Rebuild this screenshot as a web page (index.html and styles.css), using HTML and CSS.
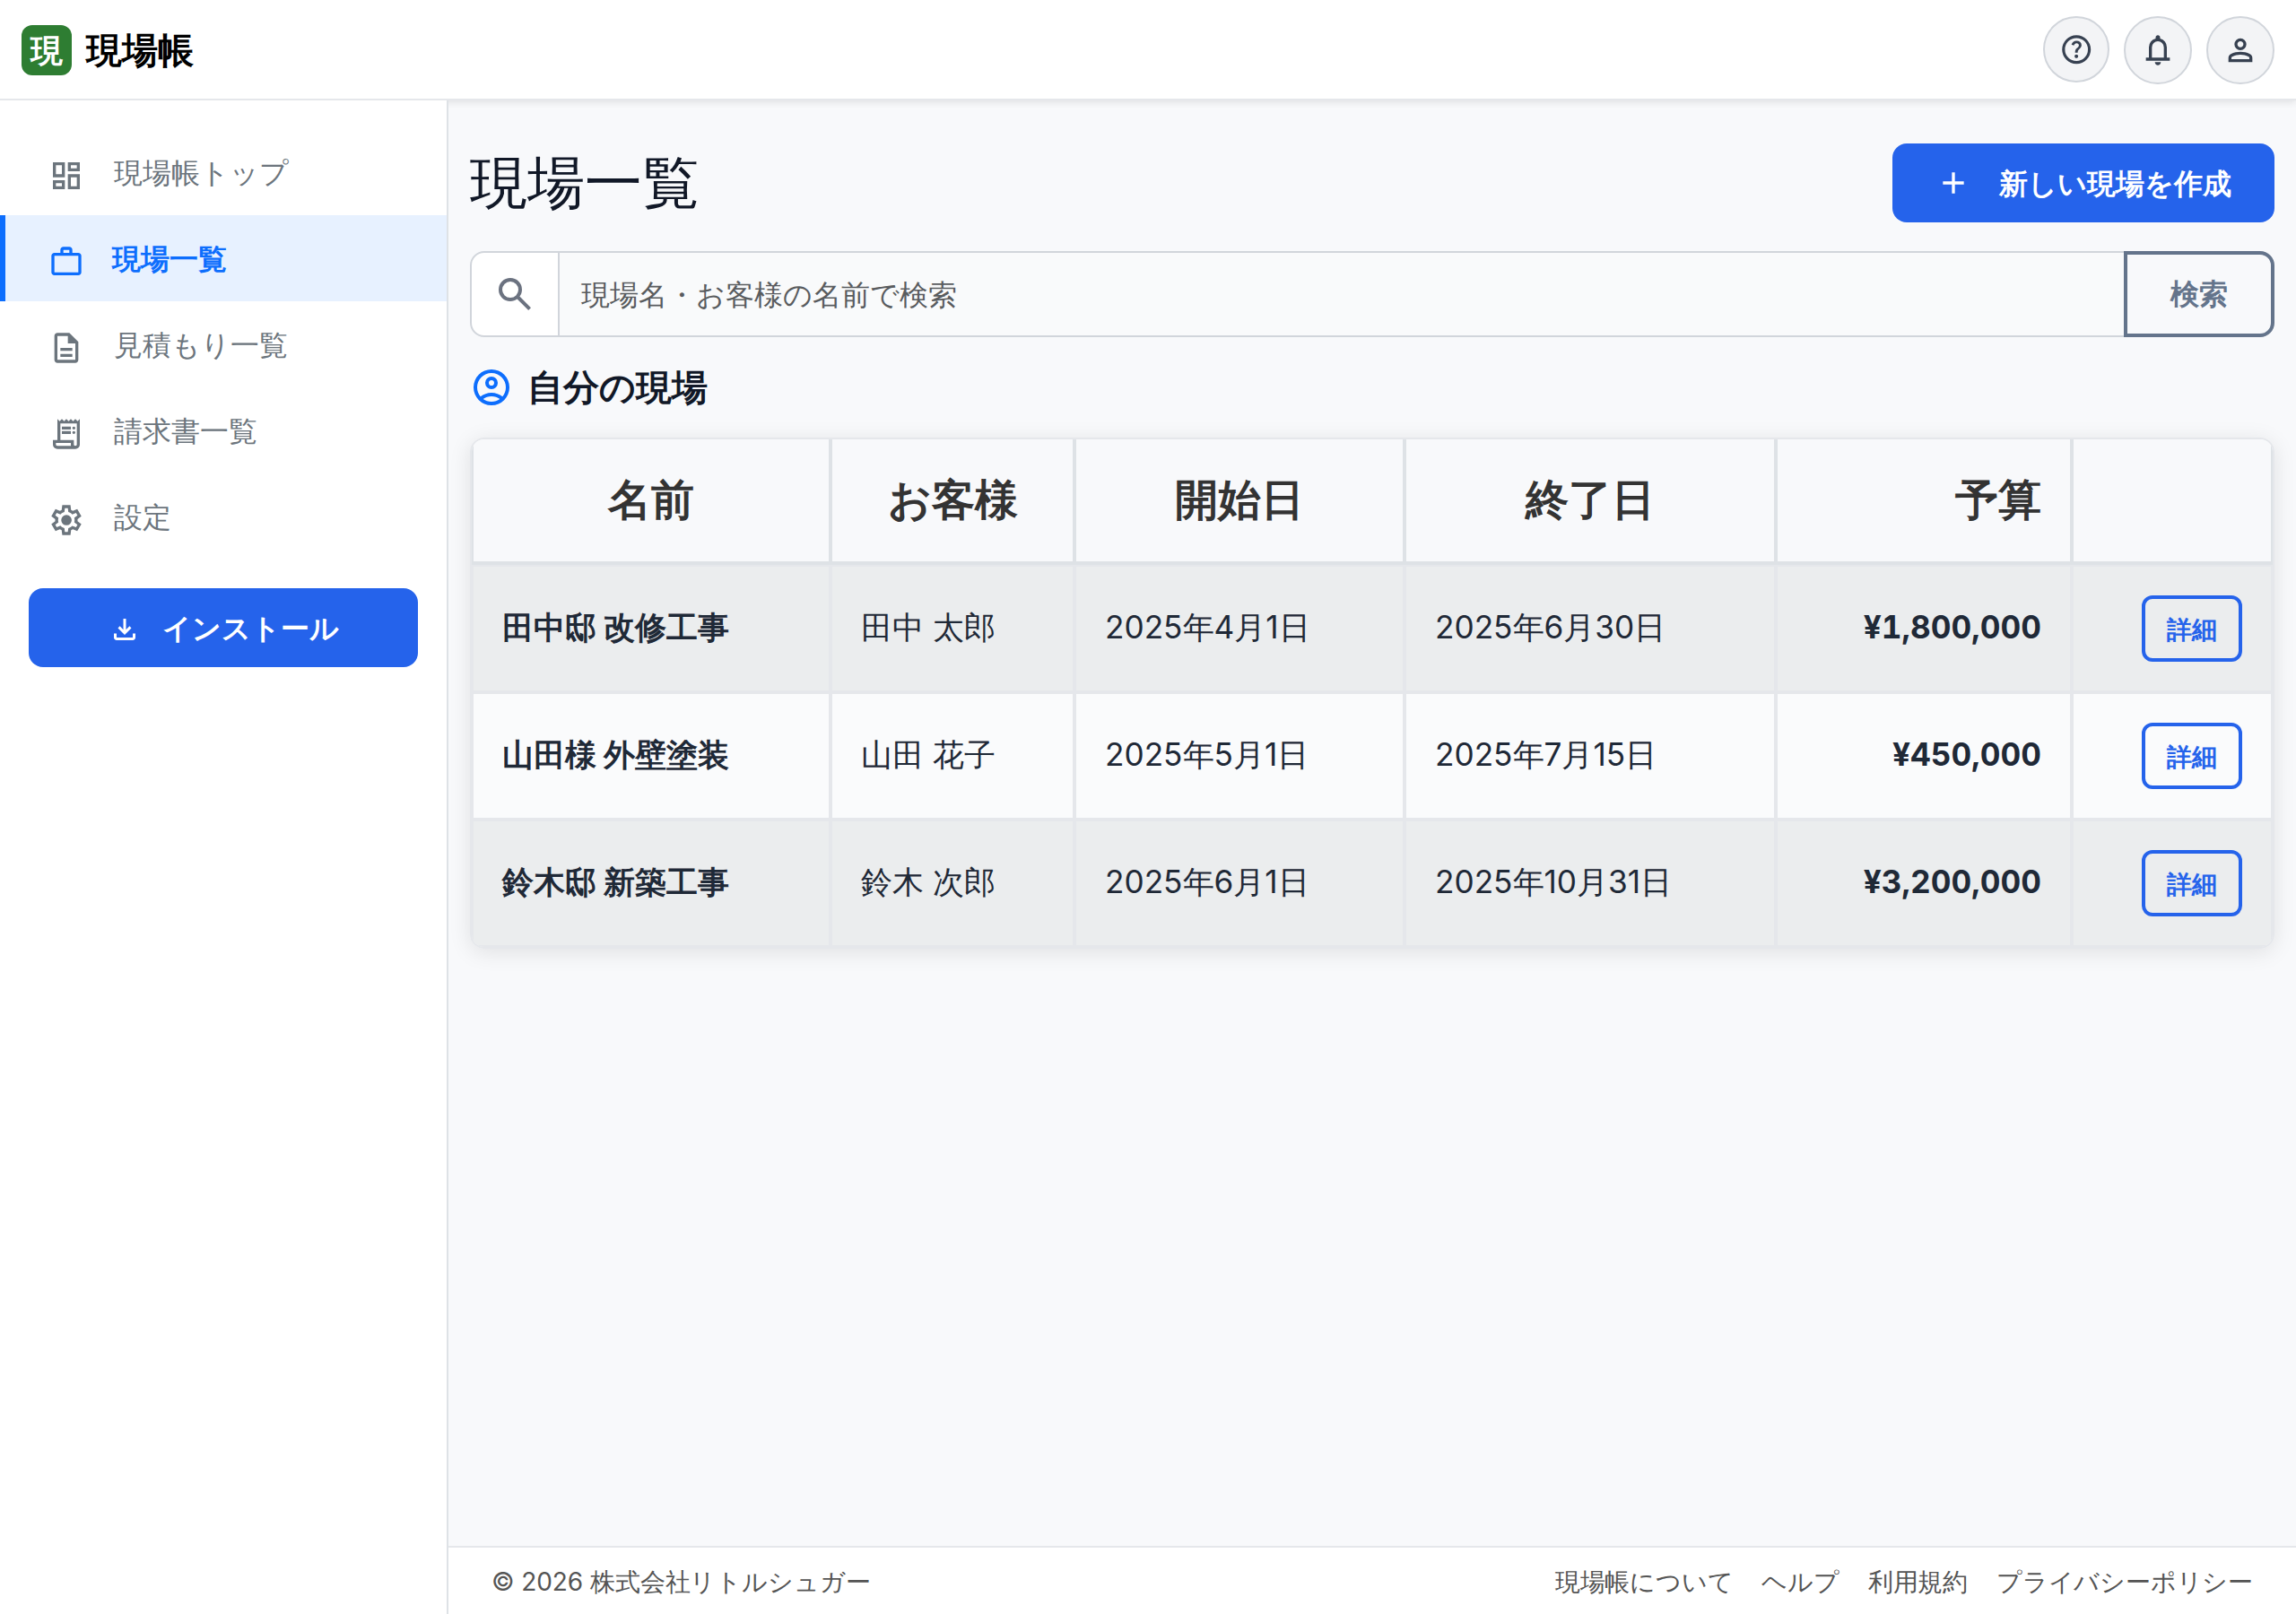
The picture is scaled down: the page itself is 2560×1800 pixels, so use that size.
FILE: index.html
```html
<!DOCTYPE html>
<html lang="ja">
<head>
<meta charset="utf-8">
<title>現場一覧 - 現場帳</title>
<link rel="stylesheet" href="styles.css">
</head>
<body>
<header class="topbar">
  <a class="brand"><span class="brand-mark">現</span><span class="brand-name">現場帳</span></a>
  <div class="top-actions">
    <button class="round-btn round-btn-help"><svg viewBox="0 -960 960 960"><path d="M478-240q21 0 35.500-14.500T528-290q0-21-14.500-35.500T478-340q-21 0-35.500 14.500T428-290q0 21 14.500 35.500T478-240Zm-36-154h74q0-33 7.500-52t42.500-52q26-26 41-49.500t15-56.500q0-56-41-86t-97-30q-57 0-92.500 30T342-618l66 26q5-18 22.500-39t53.500-21q32 0 48 17.500t16 38.500q0 20-12 37.500T506-526q-44 39-54 59t-10 73Zm38 314q-83 0-156-31.500T197-197q-54-54-85.500-127T80-480q0-83 31.500-156T197-763q54-54 127-85.500T480-880q83 0 156 31.500T763-763q54 54 85.500 127T880-480q0 83-31.500 156T763-197q-54 54-127 85.500T480-80Zm0-80q134 0 227-93t93-227q0-134-93-227t-227-93q-134 0-227 93t-93 227q0 134 93 227t227 93Z"/></svg></button>
    <button class="round-btn"><svg viewBox="0 -960 960 960"><path d="M160-200v-80h80v-280q0-83 50-147.500T420-792v-28q0-25 17.500-42.500T480-880q25 0 42.500 17.500T540-820v28q80 20 130 84.500T720-560v280h80v80H160Zm320 120q-33 0-56.500-23.500T400-160h160q0 33-23.500 56.500T480-80ZM320-280h320v-280q0-66-47-113t-113-47q-66 0-113 47t-47 113v280Z"/></svg></button>
    <button class="round-btn"><svg viewBox="0 -960 960 960"><path d="M480-480q-66 0-113-47t-47-113q0-66 47-113t113-47q66 0 113 47t47 113q0 66-47 113t-113 47ZM160-160v-112q0-34 17.500-62.500T224-378q62-31 126-46.500T480-440q66 0 130 15.500T736-378q29 15 46.500 43.500T800-272v112H160Zm80-80h480v-32q0-11-5.500-20T700-306q-54-27-109-40.500T480-360q-56 0-111 13.500T260-306q-9 5-14.500 14t-5.500 20v32Zm240-320q33 0 56.500-23.500T560-640q0-33-23.500-56.500T480-720q-33 0-56.500 23.500T400-640q0 33 23.500 56.500T480-560Z"/></svg></button>
  </div>
</header>
<div class="shell">
  <aside class="sidebar">
    <nav class="nav">
      <a class="nav-item"><svg class="nav-icon" viewBox="0 -960 960 960"><path d="M520-600v-240h320v240H520ZM120-440v-400h320v400H120Zm400 320v-400h320v400H520Zm-400 0v-240h320v240H120Zm80-400h160v-240H200v240Zm400 320h160v-240H600v240Zm0-480h160v-80H600v80ZM200-200h160v-80H200v80Z"/></svg><span>現場帳トップ</span></a>
      <a class="nav-item nav-item-active"><svg class="nav-icon" viewBox="0 -960 960 960"><path d="M160-120q-33 0-56.500-23.500T80-200v-440q0-33 23.500-56.500T160-720h160v-80q0-33 23.500-56.500T400-880h160q33 0 56.500 23.500T640-800v80h160q33 0 56.500 23.500T880-640v440q0 33-23.500 56.500T800-120H160Zm0-80h640v-440H160v440Zm240-520h160v-80H400v80Z"/></svg><span>現場一覧</span></a>
      <a class="nav-item"><svg class="nav-icon" viewBox="0 -960 960 960"><path d="M320-240h320v-80H320v80Zm0-160h320v-80H320v80ZM240-80q-33 0-56.500-23.500T160-160v-640q0-33 23.500-56.500T240-880h320l240 240v480q0 33-23.500 56.500T720-80H240Zm280-520v-200H240v640h480v-440H520Z"/></svg><span>見積もり一覧</span></a>
      <a class="nav-item"><svg class="nav-icon" viewBox="0 -960 960 960"><path d="M240-80q-50 0-85-35t-35-85v-120h120v-560l60 60 60-60 60 60 60-60 60 60 60-60 60 60 60-60 60 60 60-60v680q0 50-35 85t-85 35H240Zm480-80q17 0 28.500-11.500T760-200v-560H320v440h360v120q0 17 11.500 28.500T720-160ZM360-600v-80h240v80H360Zm0 120v-80h240v80H360Zm320-120q-17 0-28.500-11.500T640-640q0-17 11.500-28.500T680-680q17 0 28.500 11.500T720-640q0 17-11.500 28.500T680-600Zm0 120q-17 0-28.500-11.500T640-520q0-17 11.500-28.500T680-560q17 0 28.500 11.500T720-520q0 17-11.500 28.500T680-480ZM240-160h360v-80H200v40q0 17 11.500 28.500T240-160Z"/></svg><span>請求書一覧</span></a>
      <a class="nav-item"><svg class="nav-icon" viewBox="0 -960 960 960"><path d="m370-80-16-128q-13-5-24.500-12T307-235l-119 50L78-375l103-78q-1-7-1-13.500v-27q0-6.500 1-13.500L78-585l110-190 119 50q11-8 23-15t24-12l16-128h220l16 128q13 5 24.500 12t22.500 15l119-50 110 190-103 78q1 7 1 13.500v27q0 6.500-2 13.500l103 78-110 190-118-50q-11 8-23 15t-24 12L590-80H370Zm70-80h79l14-106q31-8 57.500-23.500T639-327l99 41 39-68-86-65q5-14 7-29.500t2-31.500q0-16-2-31.500t-7-29.500l86-65-39-68-99 42q-22-23-48.500-38.500T533-694l-13-106h-79l-14 106q-31 8-57.500 23.500T321-633l-99-41-39 68 86 64q-5 15-7 30t-2 32q0 16 2 31t7 30l-86 65 39 68 99-42q22 23 48.500 38.500T427-266l13 106Zm42-180q58 0 99-41t41-99q0-58-41-99t-99-41q-59 0-99.500 41T342-480q0 58 40.500 99t99.500 41Z"/></svg><span>設定</span></a>
    </nav>
    <button class="btn btn-install"><svg viewBox="0 -960 960 960"><path d="M480-320 280-520l56-58 104 104v-326h80v326l104-104 56 58-200 200ZM240-160q-33 0-56.500-23.500T160-240v-120h80v120h480v-120h80v120q0 33-23.500 56.500T720-160H240Z"/></svg><span>インストール</span></button>
  </aside>
  <div class="content">
    <main class="main">
      <div class="page-head">
        <h1 class="page-title">現場一覧</h1>
        <button class="btn btn-create"><svg viewBox="0 -960 960 960"><path d="M440-440H200v-80h240v-240h80v240h240v80H520v240h-80v-240Z"/></svg><span>新しい現場を作成</span></button>
      </div>
      <form class="search">
        <span class="search-icon"><svg viewBox="0 -960 960 960"><path d="M784-120 532-372q-30 24-69 38t-83 14q-109 0-184.500-75.500T120-580q0-109 75.500-184.500T380-840q109 0 184.500 75.500T640-580q0 44-14 83t-38 69l252 252-56 56ZM380-400q75 0 127.500-52.500T560-580q0-75-52.500-127.500T380-760q-75 0-127.500 52.500T200-580q0 75 52.500 127.500T380-400Z"/></svg></span>
        <span class="search-field">現場名・お客様の名前で検索</span>
        <button type="button" class="search-btn">検索</button>
      </form>
      <h2 class="section-title"><svg viewBox="0 -960 960 960"><path d="M234-276q51-39 114-61.500T480-360q69 0 132 22.500T726-276q35-41 54.500-93T800-480q0-133-93.500-226.500T480-800q-133 0-226.500 93.500T160-480q0 59 19.500 111t54.500 93Zm246-164q-59 0-99.500-40.500T340-580q0-59 40.500-99.500T480-720q59 0 99.500 40.500T620-580q0 59-40.500 99.500T480-440Zm0 360q-83 0-156-31.500T197-197q-54-54-85.500-127T80-480q0-83 31.500-156T197-763q54-54 127-85.500T480-880q83 0 156 31.500T763-763q54 54 85.500 127T880-480q0 83-31.500 156T763-197q-54 54-127 85.500T480-80Zm0-80q53 0 100-15.500t86-44.500q-39-29-86-44.500T480-280q-53 0-100 15.500T294-220q39 29 86 44.500T480-160Zm0-360q26 0 43-17t17-43q0-26-17-43t-43-17q-26 0-43 17t-17 43q0 26 17 43t43 17Z"/></svg><span>自分の現場</span></h2>
      <div class="table-wrap">
        <table class="table">
          <colgroup><col class="c-name"><col class="c-client"><col class="c-start"><col class="c-end"><col class="c-budget"><col class="c-action"></colgroup>
          <thead>
            <tr><th>名前</th><th>お客様</th><th>開始日</th><th>終了日</th><th class="right">予算</th><th></th></tr>
          </thead>
          <tbody>
            <tr><td class="strong">田中邸 改修工事</td><td>田中 太郎</td><td>2025年4月1日</td><td>2025年6月30日</td><td class="strong right num">¥1,800,000</td><td class="action"><a class="detail">詳細</a></td></tr>
            <tr><td class="strong">山田様 外壁塗装</td><td>山田 花子</td><td>2025年5月1日</td><td>2025年7月15日</td><td class="strong right num">¥450,000</td><td class="action"><a class="detail">詳細</a></td></tr>
            <tr><td class="strong">鈴木邸 新築工事</td><td>鈴木 次郎</td><td>2025年6月1日</td><td>2025年10月31日</td><td class="strong right num">¥3,200,000</td><td class="action"><a class="detail">詳細</a></td></tr>
          </tbody>
        </table>
      </div>
    </main>
    <footer class="footer">
      <span class="copyright">© 2026 株式会社リトルシュガー</span>
      <nav class="footer-links"><a>現場帳について</a><a>ヘルプ</a><a>利用規約</a><a>プライバシーポリシー</a></nav>
    </footer>
  </div>
</div>
</body>
</html>
```
FILE: styles.css
```css
* { box-sizing: border-box; }

body {
  margin: 0;
  height: 1800px;
  display: flex;
  flex-direction: column;
  background: #f8f9fb;
  color: #1f2937;
  font-family: Inter, sans-serif;
  font-size: 32px;
  line-height: 1.5;
}

svg { display: block; fill: currentColor; flex: none; }
button { font: inherit; margin: 0; padding: 0; }

/* Top bar */
.topbar {
  flex: none;
  height: 112px;
  padding: 0 24px 0;
  display: flex;
  align-items: flex-start;
  justify-content: space-between;
  background: #fff;
  border-bottom: 2px solid #e5e7eb;
  box-shadow: 0 2px 8px rgba(0, 0, 0, 0.1);
}
.brand {
  height: 112px;
  display: flex;
  align-items: center;
  gap: 16px;
  color: #000;
  font-weight: 700;
}
.brand-mark {
  width: 56px;
  height: 56px;
  display: grid;
  place-items: center;
  border-radius: 12px;
  background: #2e7d32;
  color: #fff;
  font-size: 36px;
  line-height: 1;
}
.brand-name { font-size: 40px; line-height: 1; }
.top-actions {
  padding-top: 18px;
  display: flex;
  align-items: flex-start;
  gap: 16px;
}
.round-btn {
  width: 76px;
  height: 76px;
  display: grid;
  place-items: center;
  border: 2px solid #d1d5db;
  border-radius: 50%;
  background: #f3f4f6;
  color: #374151;
}
.round-btn svg { width: 40px; height: 40px; }
.round-btn-help { width: 74px; height: 74px; }
.round-btn-help svg { width: 38.4px; height: 38.4px; }

/* Layout */
.shell { flex: 1; display: flex; min-height: 0; }
.sidebar {
  position: relative;
  flex: none;
  width: 500px;
  padding-top: 32px;
  background: #fff;
  border-right: 2px solid #dee2e6;
}
.content { flex: 1; min-width: 0; display: flex; flex-direction: column; }

/* Side navigation */
.nav-item {
  height: 96px;
  padding-left: 54px;
  display: flex;
  align-items: center;
  gap: 33px;
  color: #6c757d;
}
.nav-item span { padding-top: 2px; }
.nav-icon { width: 40px; height: 40px; margin-top: 8px; }
.nav-item-active {
  padding-left: 48px;
  border-left: 6px solid #0d6efd;
  gap: 31px;
  background: #e7f1ff;
  color: #0d6efd;
  font-weight: 700;
}

/* Buttons */
.btn {
  height: 88px;
  display: flex;
  align-items: center;
  justify-content: center;
  border: 0;
  border-radius: 16px;
  background: #2563eb;
  color: #fff;
  font-weight: 700;
}
.btn span { padding-top: 1px; }
.btn-install { width: 434px; margin: 32px 0 0 32px; gap: 24px; }
.btn-install svg { width: 36px; height: 36px; margin-top: 4px; }
.btn-create { padding: 0 48px; gap: 31px; }
.btn-create svg { width: 40px; height: 40px; }

/* Page */
.main { flex: 1; padding: 48px 24px 0; }
.page-head { display: flex; align-items: center; justify-content: space-between; }
.page-title {
  margin: 0;
  color: #111827;
  font-size: 64px;
  font-weight: 400;
  line-height: 86px;
  padding-bottom: 2px;
}

.search {
  height: 96px;
  margin-top: 32px;
  display: flex;
}
.search-icon {
  width: 100px;
  display: grid;
  place-items: center;
  border: 2px solid #d1d5db;
  border-radius: 16px 0 0 16px;
  background: #fff;
  color: #6b7280;
}
.search-icon svg { width: 48px; height: 48px; }
.search-field {
  flex: 1;
  padding-left: 24px;
  border: solid #d1d5db;
  border-width: 2px 0;
  background: #f9fafb;
  color: #595c5f;
  line-height: 93px;
}
.search-btn {
  width: 168px;
  border: 4px solid #64748b;
  border-radius: 0 16px 16px 0;
  background: transparent;
  color: #64748b;
  font-weight: 700;
}

.section-title {
  margin: 32px 0;
  height: 48px;
  display: flex;
  align-items: center;
  gap: 16px;
  color: #111827;
  font-size: 40px;
  font-weight: 700;
  line-height: 48px;
}
.section-title svg { width: 48px; height: 48px; color: #0d6efd; }

/* Table */
.table-wrap {
  overflow: hidden;
  border: 2px solid #e5e7eb;
  border-radius: 16px;
  box-shadow: 0 4px 24px rgba(0, 0, 0, 0.1);
}
.table {
  width: 100%;
  table-layout: fixed;
  border-collapse: separate;
  border-spacing: 0;
}
.c-name { width: 400px; }
.c-client { width: 272px; }
.c-start { width: 368px; }
.c-end { width: 414px; }
.c-budget { width: 330px; }
.c-action { width: 224px; }
.table th {
  height: 140px;
  padding: 0 32px 3px;
  border: solid #dee2e6;
  border-width: 0 2px 4px;
  background: #f8f9fb;
  color: #333;
  font-size: 48px;
  font-weight: 700;
  text-align: center;
}
.table td {
  height: 142px;
  padding: 0 32px 4px;
  border: 2px solid #e5e7eb;
  background: #fafbfc;
  font-size: 35.2px;
  vertical-align: middle;
  white-space: nowrap;
}
.table tbody tr:nth-child(odd) td { background: #ebedee; }
.table .strong { font-weight: 700; }
.table .right { text-align: right; }
.table .num { font-variant-numeric: tabular-nums; }
.table .action { padding-bottom: 0; text-align: right; }
.detail {
  display: inline-block;
  width: 112px;
  height: 74px;
  vertical-align: middle;
  border: 4px solid #2563eb;
  border-radius: 12px;
  color: #2563eb;
  font-size: 28px;
  font-weight: 700;
  line-height: 68px;
  text-align: center;
}

/* Footer */
.footer {
  height: 76px;
  padding: 1px 48px 0;
  display: flex;
  align-items: center;
  justify-content: space-between;
  border-top: 2px solid #e5e7eb;
  background: #fff;
  color: #555;
  font-size: 28px;
}
.copyright { letter-spacing: -0.1px; }
.footer-links { display: flex; gap: 32px; letter-spacing: -0.2px; }
```
